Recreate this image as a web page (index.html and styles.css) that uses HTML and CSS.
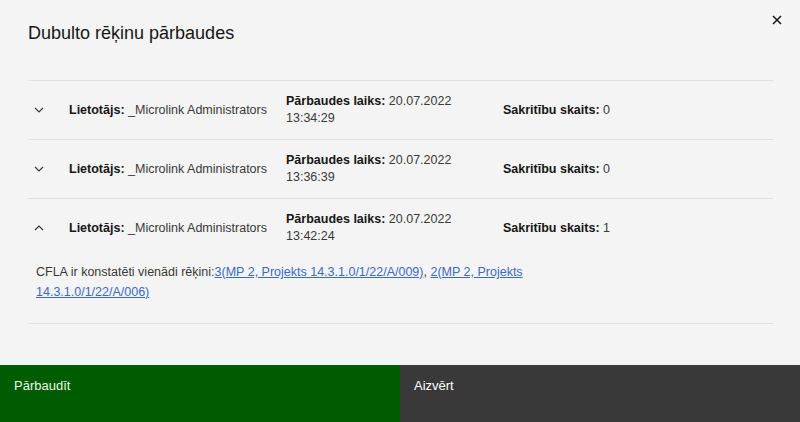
FILE: index.html
```html
<!DOCTYPE html>
<html>
<head>
	<link rel="stylesheet" href="styles.css">
</head>
<body>
	<div class="modal">
		<div class="modal-header">
			<h2>Dubulto rēķinu pārbaudes</h2>
			<button class="close" type="button" aria-label="Aizvērt">
				<svg width="10" height="10" viewBox="0 0 10 10"><path d="M1 1L9 9M9 1L1 9" stroke="#161616" stroke-width="1.5"/></svg>
			</button>
		</div>

		<ul class="accordion">
			<li class="item">
				<div class="heading">
					<svg class="chevron" width="10" height="6" viewBox="0 0 10 6"><path d="M1 1L5 5L9 1" fill="none" stroke="#393939" stroke-width="1.2"/></svg>
					<div class="col"><b>Lietotājs:</b> _Microlink Administrators</div>
					<div class="col"><b>Pārbaudes laiks:</b> 20.07.2022 13:34:29</div>
					<div class="col"><b>Sakritību skaits:</b> 0</div>
				</div>
			</li>
			<li class="item">
				<div class="heading">
					<svg class="chevron" width="10" height="6" viewBox="0 0 10 6"><path d="M1 1L5 5L9 1" fill="none" stroke="#393939" stroke-width="1.2"/></svg>
					<div class="col"><b>Lietotājs:</b> _Microlink Administrators</div>
					<div class="col"><b>Pārbaudes laiks:</b> 20.07.2022 13:36:39</div>
					<div class="col"><b>Sakritību skaits:</b> 0</div>
				</div>
			</li>
			<li class="item open">
				<div class="heading">
					<svg class="chevron" width="10" height="6" viewBox="0 0 10 6"><path d="M1 5L5 1L9 5" fill="none" stroke="#393939" stroke-width="1.2"/></svg>
					<div class="col"><b>Lietotājs:</b> _Microlink Administrators</div>
					<div class="col"><b>Pārbaudes laiks:</b> 20.07.2022 13:42:24</div>
					<div class="col"><b>Sakritību skaits:</b> 1</div>
				</div>
				<p class="content">CFLA ir konstatēti vienādi rēķini:<a href="#">3(MP 2, Projekts 14.3.1.0/1/22/A/009)</a>, <a href="#">2(MP 2, Projekts 14.3.1.0/1/22/A/006)</a></p>
			</li>
		</ul>

		<div class="modal-footer">
			<button type="button" class="btn btn-primary">Pārbaudīt</button>
			<button type="button" class="btn btn-secondary">Aizvērt</button>
		</div>
	</div>
</body>
</html>
```

FILE: styles.css
```css
html,
body {
	margin: 0;
	padding: 0;
}

body {
	font-family: "Liberation Sans", Arial, sans-serif;
	color: #393939;
	background: #f4f4f4;
}

.modal {
	width: 800px;
	height: 422px;
	display: flex;
	flex-direction: column;
	background: #f4f4f4;
}

.modal-header {
	display: flex;
	justify-content: space-between;
	align-items: flex-start;
	padding: 19px 15px 0 28px;
	height: 80px;
	box-sizing: border-box;
}

.modal-header h2 {
	margin: 0;
	font-size: 18px;
	line-height: 28px;
	font-weight: 400;
	color: #161616;
}

.close {
	border: 0;
	background: none;
	padding: 0;
	width: 16px;
	height: 16px;
	margin-top: -7px;
	display: flex;
	align-items: center;
	justify-content: center;
}

.accordion {
	list-style: none;
	margin: 0 27px 0 28px;
	padding: 0;
}

.item {
	border-top: 1px solid #e0e0e0;
}

.item:last-child {
	border-bottom: 1px solid #e0e0e0;
}

.heading {
	display: flex;
	align-items: center;
	height: 58px;
	font-size: 12.5px;
	line-height: 17px;
}

.chevron {
	margin: 0 25px 0 6px;
	flex: none;
}

.col {
	width: 217px;
	flex: none;
	padding-right: 30px;
	box-sizing: border-box;
}

.col:first-of-type {
	padding-right: 0;
}

.col b {
	color: #161616;
}

.content {
	margin: 0;
	padding: 5px 200px 21px 8px;
	font-size: 12.5px;
	line-height: 20px;
}

.content a {
	color: #3b6ac6;
}

.modal-footer {
	margin-top: auto;
	display: flex;
	height: 57px;
}

.btn {
	flex: 1;
	border: 0;
	text-align: left;
	padding: 13px 14px;
	display: flex;
	align-items: flex-start;
	font-family: "Liberation Sans", Arial, sans-serif;
	font-size: 13px;
	color: #fff;
}

.btn-primary {
	background: #005c00;
	color: #e8f7e4;
}

.btn-secondary {
	background: #393939;
}
```
